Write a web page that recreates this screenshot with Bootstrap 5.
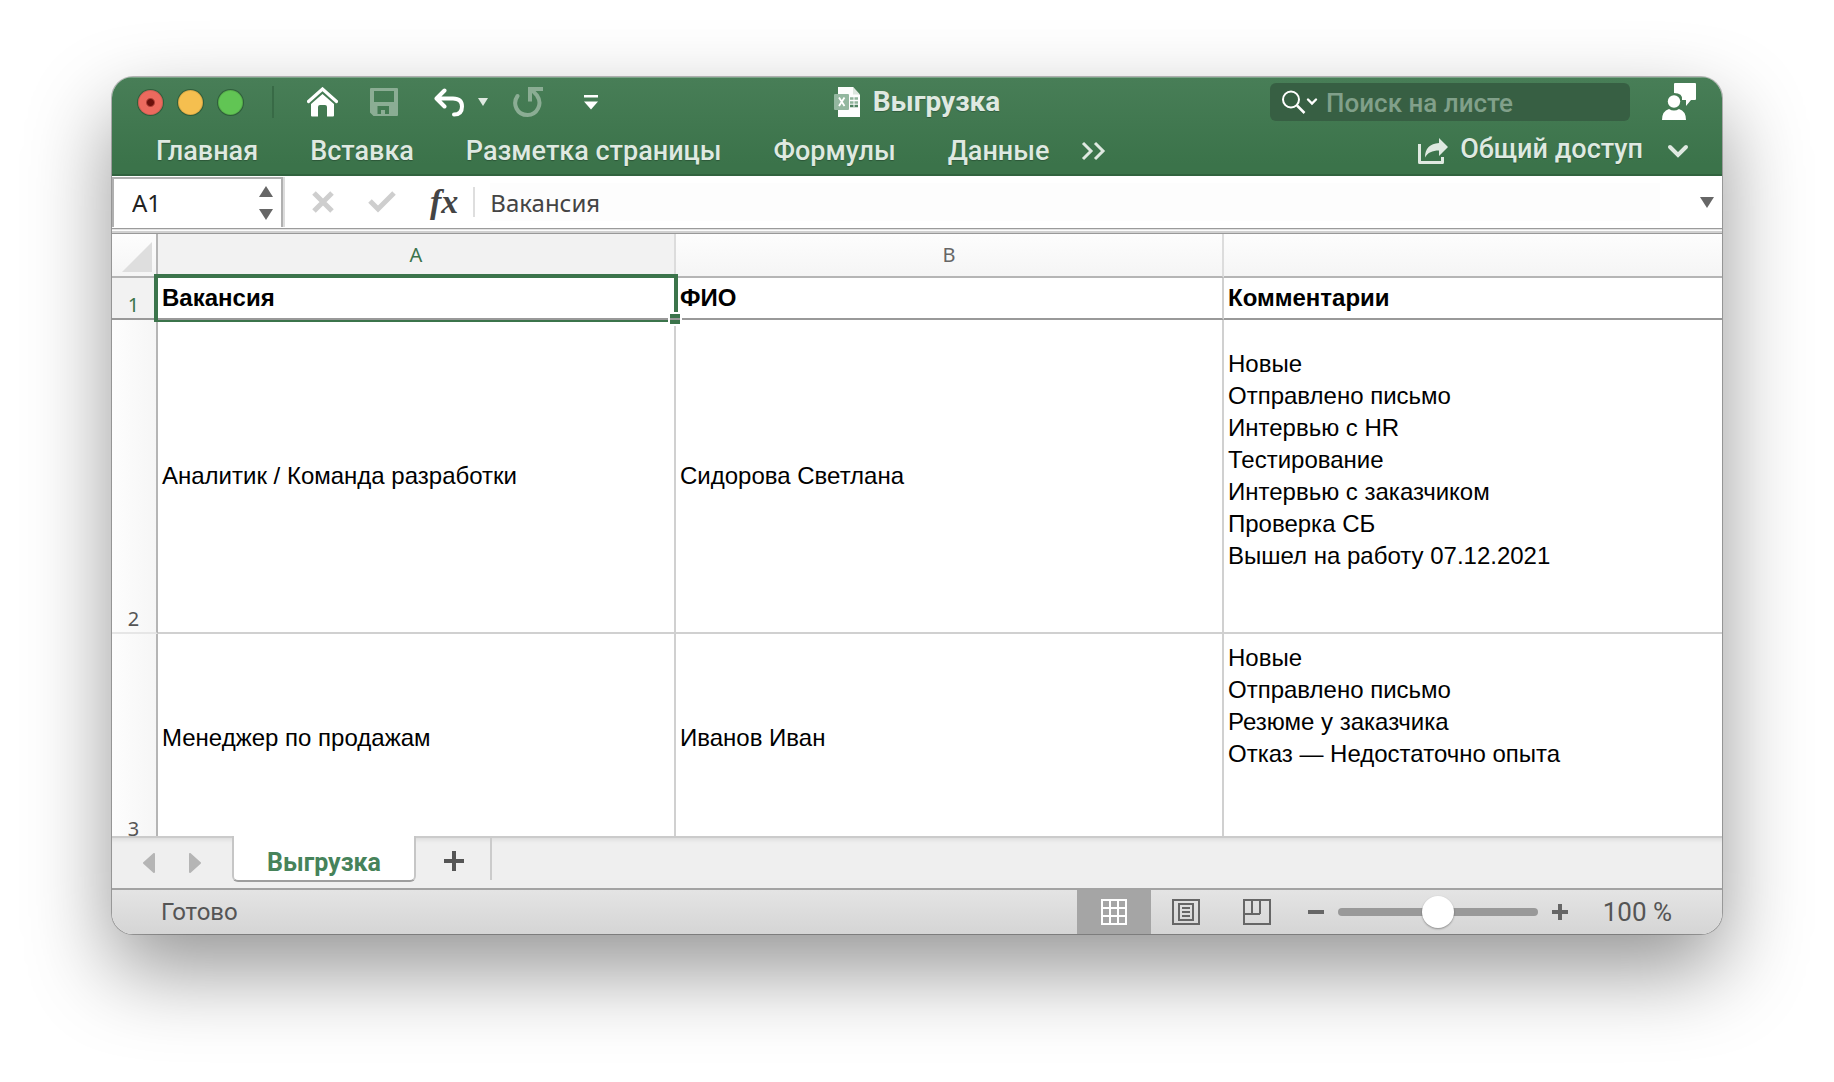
<!DOCTYPE html>
<html lang="ru">
<head>
<meta charset="utf-8">
<meta name="viewport" content="width=device-width, initial-scale=1">
<title>Выгрузка</title>
<link href="https://cdn.jsdelivr.net/npm/bootstrap@5.3.0/dist/css/bootstrap.min.css" rel="stylesheet">
<style>
  :root {
    --ui: Roboto, "Liberation Sans", sans-serif;
    --office: "Noto Sans", "Open Sans", sans-serif;
    --cell: "Liberation Sans", Arial, sans-serif;
    --green: #3b744b;
  }
  body { background: #fff; font-family: var(--ui); padding: 77px 112px 148px; }
  button { background: none; border: 0; padding: 0; color: inherit; font: inherit; }
  input { border: 0; outline: 0; padding: 0; background: none; min-width: 0; }
  svg { display: block; flex: none; }
  a { color: inherit; text-decoration: none; }

  .app-window { border-radius: 21px; overflow: hidden; box-shadow: 0 0 0 1px rgba(0,0,0,.26), 0 36px 84px rgba(0,0,0,.42); }

  .ribbon { background: linear-gradient(#487e57, #3b734a 90%); border-bottom: 2px solid #31633f; height: 99px; color: #dfe9e1; box-shadow: inset 0 1px 0 #7ba387; }
  .title-row { height: 50px; padding: 0 26px; }
  .side { flex: 1 1 0; }
  .dots { gap: 15px; }
  .dot { width: 25px; height: 25px; border-radius: 50%; border: 1px solid rgba(0,0,0,.12); box-shadow: 0 0 0 1px rgba(20,60,30,.45); }
  .dot-red { background: radial-gradient(circle, #6b100c 3px, #ec6a5e 5px); }
  .dot-yellow { background: #f5bf4f; }
  .dot-green { background: #61c554; }
  .split { width: 2px; height: 32px; margin: 0 33px 0 29px; background: #386a46; }
  .quick { color: #fff; }
  .faded { color: #8bad94; }
  .doc-title { font-size: 28px; font-weight: 700; line-height: 32px; text-shadow: 0 1px 1px rgba(0,0,0,.25); }
  .search-box { width: 360px; height: 38px; border-radius: 6px; background: #375f43; padding-left: 12px; color: #fff; }
  .search-box input { color: #fff; font-size: 26px; font-weight: 500; margin-left: 8px; height: 38px; padding-top: 2px; }
  .search-box input::placeholder { color: #81a08a; opacity: 1; }
  .menu-row { height: 47px; padding: 0 33px 0 44px; font-size: 27px; font-weight: 500; line-height: 32px; text-shadow: 0 1px 1px rgba(0,0,0,.25); }
  .menu-tabs { gap: 52px; }
  .more { margin-left: 32px; }
  .share { gap: 12px; }

  .formula-bar { background: #fff; height: 52px; font-family: var(--office); font-size: 24px; color: #444; padding-right: 8px; }
  .name-box { width: 171px; height: 50px; border: 2px solid #b0b0b0; border-bottom: 0; box-shadow: 2px 0 0 #dcdcdc; padding: 0 8px 0 18px; margin-top: -1px; }
  .name-box input { width: 100px; color: #222; }
  .spin { gap: 12px; color: #666; }
  .formula-tools { gap: 34px; margin: 0 15px 0 29px; color: #cecece; }
  .fx { font: italic 700 34px/34px "Liberation Serif", serif; color: #444; }
  .formula-split { width: 2px; height: 30px; background: #dedede; margin-right: 15px; }
  .formula-input { background: #fdfdfd; height: 38px; color: #444; }
  .bar-rule { height: 6px; background: linear-gradient(#9b9b9b 1px, #e2e2e2 1px 2px, #fbfbfb 2px 3px, #d0d0d0 3px 5px, #999 5px); }

  .sheet-view { height: 602px; overflow: hidden; background: #fff; }
  .sheet { width: 100%; table-layout: fixed; border-collapse: separate; border-spacing: 0; font-family: var(--cell); font-size: 24px; line-height: 32px; color: #000; }
  .sheet th, .sheet td { padding: 0 4px; border-right: 2px solid #d0d0d0; border-bottom: 2px solid #d0d0d0; }
  .sheet th:last-child, .sheet td:last-child { border-right: 0; }
  .c-num { width: 46px; }
  .c-a { width: 518px; }
  .c-b { width: 548px; }
  .sheet thead th { height: 44px; text-align: center; font: 400 20px/28px var(--office); color: #666; background: linear-gradient(#fdfdfd, #f5f5f5); border-color: #b5b5b5; border-right-color: #dcdcdc; }
  .sheet thead th.picked { background: #f2f2f2; color: var(--green); }
  .sheet thead th.corner { padding: 4px 4px 0 10px; border-right-color: #b5b5b5; }
  .sheet tbody th { font: 400 20px/24px var(--office); color: #555; vertical-align: bottom; text-align: center; background: linear-gradient(90deg, #fdfdfd, #f6f6f6); border-right-color: #b5b5b5; border-bottom-color: #e6e6e6; padding: 0 1px 1px 0; }
  .sheet tbody th.picked { background: #f2f2f2; color: var(--green); }
  .sheet .row-one td, .sheet .row-one th { height: 42px; border-bottom-color: #999; }
  .sheet .row-one td { font-weight: 700; }
  .row-two { height: 314px; }
  .row-three { height: 210px; }
  .active-cell { position: relative; }
  .active-cell::before { content: ""; position: absolute; inset: -4px; border: 4px solid var(--green); border-bottom-width: 2px; }
  .active-cell::after { content: ""; position: absolute; right: -6px; bottom: -6px; width: 10px; height: 10px; background: linear-gradient(var(--green) 4px, #999 4px 6px, var(--green) 6px); box-shadow: 0 0 0 2px #fff; }

  .tab-bar { height: 54px; background: #efefef; border-top: 2px solid #cbcbcb; border-bottom: 2px solid #a3a3a3; padding-left: 30px; color: #b5b5b5; box-shadow: inset 0 5px 4px -3px rgba(0,0,0,.08); }
  .tab-arrows { gap: 32px; margin-right: 30px; }
  .sheet-tab { width: 184px; height: 46px; margin-top: -2px; background: #fff; border: 2px solid #c6c6c6; border-top: 0; border-bottom-color: #9e9e9e; border-radius: 0 0 6px 6px; color: #46835a; font-size: 25px; font-weight: 700; padding-top: 8px; }
  .add-tab { color: #555; margin: 0 26px 4px 28px; }
  .tab-split { width: 2px; height: 42px; background: #cbcbcb; }

  .status-bar { height: 44px; background: linear-gradient(#e4e4e4, #d5d5d5); color: #555; font-size: 24px; padding: 0 50px 0 49px; }
  .view-btn { height: 44px; width: 71px; color: #666; }
  .view-btn.on { width: 74px; background: #a5a5a5; color: #fff; }
  .zoom-group { gap: 14px; margin: 0 35px 0 15px; color: #666; }
  .zoom-value { font-size: 26px; }
  .zoom-range { appearance: none; width: 200px; height: 34px; margin: 0; }
  .zoom-range::-webkit-slider-runnable-track { height: 8px; border-radius: 4px; background: #999; }
  .zoom-range::-webkit-slider-thumb { appearance: none; width: 32px; height: 32px; margin-top: -12px; border-radius: 50%; background: #fff; box-shadow: 0 1px 2px rgba(0,0,0,.35); }
</style>
<script src="https://cdn.jsdelivr.net/npm/bootstrap@5.3.0/dist/js/bootstrap.bundle.min.js"></script>
</head>
<body>
<main class="app-window">
  <header class="ribbon">
    <div class="title-row d-flex align-items-center">
      <div class="side d-flex align-items-center">
        <div class="dots d-flex">
          <button class="dot dot-red" aria-label="Закрыть"></button>
          <button class="dot dot-yellow" aria-label="Свернуть"></button>
          <button class="dot dot-green" aria-label="Развернуть"></button>
        </div>
        <span class="split"></span>
        <div class="quick d-flex align-items-center">
          <button aria-label="Домой" class="me-4 pe-2">
            <svg width="31" height="30" viewBox="0 0 31 30"><path d="M1.500 14.500 15.500 2l14 12.500" fill="none" stroke="currentColor" stroke-width="3.200" stroke-linecap="round"/><path d="M4 17 15.500 7 27 17v11.500q0 1-1 1h-6V20q0-2-2-2h-5q-2 0-2 2v9.500H5q-1 0-1-1z" fill="currentColor"/></svg>
          </button>
          <button aria-label="Сохранить" class="faded me-4">
            <svg width="28" height="28" viewBox="0 0 28 28"><path fill="currentColor" fill-rule="evenodd" d="M1 0h26q1 0 1 1v26q0 1-1 1H3.500L0 24.500V1q0-1 1-1zM4 3v11h20V3zM7.500 18v8H11v-4h4v4h4v-8z"/></svg>
          </button>
          <button aria-label="Отменить" class="ms-2 ps-1">
            <svg width="31" height="29" viewBox="0 0 31 29" fill="none" stroke="currentColor" stroke-width="4" stroke-linecap="round" stroke-linejoin="round"><path d="M10.500 2.500 2.500 10.500l8 8M3.500 10.500H19q9 0 9 8t-8 8"/></svg>
          </button>
          <button aria-label="Список отмены" class="ms-2 ps-1">
            <svg width="12" height="10" viewBox="0 0 12 10"><path d="M1 1h10L6 9z" fill="#dfe9e1"/></svg>
          </button>
          <button aria-label="Повторить" class="faded ms-4">
            <svg width="31" height="30" viewBox="0 0 31 30" fill="none" stroke="currentColor" stroke-width="4"><path d="M4.500 9C-1 17 4 28 14.500 28c9.500 0 15.500-11 9.500-19.500L19 3" stroke-linecap="round"/><path d="M30 2H17v12.500"/></svg>
          </button>
          <button aria-label="Настроить панель" class="ms-4 ps-3">
            <svg width="14" height="15" viewBox="0 0 14 15"><path d="M0 0h14v2.500H0zM0 6.500h14l-7 8z" fill="currentColor"/></svg>
          </button>
        </div>
      </div>
      <div class="d-flex align-items-center">
        <svg class="me-2" width="27" height="30" viewBox="0 0 27 30"><path d="M4 0h15l7 8v22H4z" fill="#fdfdfd"/><path d="M19 0v7.500h7z" fill="#dce6de"/><path d="M16 11.500h8M16 15.500h8" stroke="#8fb39a" stroke-width="2.500"/><path d="M16 19h8" stroke="#4f8260" stroke-width="2.500"/><path d="M20 10v10" stroke="#fdfdfd"/><rect y="7" width="15" height="16" rx="1" fill="#93b79f"/><path d="m5 10.500 5.500 8.500M10.500 10.500 5 19" stroke="#fff" stroke-width="1.800" fill="none"/></svg>
        <h1 class="doc-title m-0 ps-1">Выгрузка</h1>
      </div>
      <div class="side d-flex align-items-center justify-content-end">
        <label class="search-box d-flex align-items-center">
          <svg width="36" height="24" viewBox="0 0 36 24" fill="none" stroke="currentColor" stroke-width="2"><circle cx="9" cy="9.500" r="8"/><path d="m15 15.500 7.500 7.500" stroke-width="2.500"/><path d="m26 9.500 4 4 4-4" stroke-width="2.400" stroke-linecap="round"/></svg>
          <input type="text" placeholder="Поиск на листе" aria-label="Поиск на листе">
        </label>
        <button aria-label="Учётная запись" class="ms-4 ps-2 quick">
          <svg width="34" height="38" viewBox="0 0 34 38" fill="currentColor"><path d="M13 0h20q1 0 1 1v15q0 1-1 1h-4l-5 6v-6h-4q1-7-8-7V1q0-1 1-1z"/><circle cx="12" cy="18.500" r="6.200"/><path d="M0 37q0-9 7-11 5 3 10 0 7 2 7 11z"/></svg>
        </button>
      </div>
    </div>
    <nav class="menu-row d-flex align-items-center">
      <div class="menu-tabs d-flex">
        <a href="#">Главная</a><a href="#">Вставка</a><a href="#">Разметка страницы</a><a href="#">Формулы</a><a href="#">Данные</a>
      </div>
      <button class="more" aria-label="Другие вкладки">
        <svg width="25" height="20" viewBox="0 0 25 20" fill="none" stroke="currentColor" stroke-width="3"><path d="m2 2 8 8-8 8M14 2l8 8-8 8"/></svg>
      </button>
      <a class="share d-flex align-items-center ms-auto pb-1" href="#">
        <svg class="mt-1" width="30" height="26" viewBox="0 0 30 26"><path d="M1.500 6v18.500h23V19" fill="none" stroke="currentColor" stroke-width="3" stroke-linejoin="round"/><path d="M21 0l9 9-9 9v-5.500c-7 0-11 2-14 7 0-9 5-14 14-14.500z" fill="currentColor"/></svg>
        Общий доступ
      </a>
      <button class="ms-4" aria-label="Свернуть ленту">
        <svg width="22" height="14" viewBox="0 0 22 14" fill="none" stroke="currentColor" stroke-width="4" stroke-linecap="round"><path d="m3 3 8 8 8-8"/></svg>
      </button>
    </nav>
  </header>

  <div class="formula-bar d-flex align-items-center">
    <div class="name-box d-flex align-items-center justify-content-between">
      <input type="text" value="A1" aria-label="Поле имени">
      <button class="spin d-flex flex-column" aria-label="Выбрать имя">
        <svg width="14" height="11"><path d="M0 11h14L7 0z" fill="currentColor"/></svg>
        <svg width="14" height="11"><path d="M0 0h14L7 11z" fill="currentColor"/></svg>
      </button>
    </div>
    <div class="formula-tools d-flex align-items-center">
      <button aria-label="Отмена"><svg width="22" height="22" viewBox="0 0 22 22" stroke="currentColor" stroke-width="5"><path d="m2 2 18 18M20 2 2 20"/></svg></button>
      <button aria-label="Ввод"><svg width="28" height="22" viewBox="0 0 28 22" fill="none" stroke="currentColor" stroke-width="5"><path d="m2 10 8 8L26 2"/></svg></button>
      <button class="fx" aria-label="Вставить функцию">fx</button>
    </div>
    <span class="formula-split"></span>
    <input class="formula-input flex-grow-1" type="text" value="Вакансия" aria-label="Строка формул">
    <button class="ms-4 ps-3" aria-label="Развернуть строку формул"><svg width="14" height="11"><path d="M0 0h14L7 11z" fill="#666"/></svg></button>
  </div>
  <div class="bar-rule"></div>

  <div class="sheet-view">
    <table class="sheet">
      <colgroup><col class="c-num"><col class="c-a"><col class="c-b"><col></colgroup>
      <thead>
        <tr>
          <th class="corner"><svg width="30" height="30"><path d="M30 0v30H0z" fill="#dedede"/></svg></th>
          <th class="picked" scope="col">A</th>
          <th scope="col">B</th>
          <th></th>
        </tr>
      </thead>
      <tbody>
        <tr class="row-one">
          <th class="picked" scope="row">1</th>
          <td class="active-cell">Вакансия</td>
          <td>ФИО</td>
          <td>Комментарии</td>
        </tr>
        <tr class="row-two">
          <th scope="row">2</th>
          <td>Аналитик / Команда разработки</td>
          <td>Сидорова Светлана</td>
          <td>Новые<br>Отправлено письмо<br>Интервью с HR<br>Тестирование<br>Интервью с заказчиком<br>Проверка СБ<br>Вышел на работу 07.12.2021<br><br></td>
        </tr>
        <tr class="row-three">
          <th scope="row">3</th>
          <td>Менеджер по продажам</td>
          <td>Иванов Иван</td>
          <td>Новые<br>Отправлено письмо<br>Резюме у заказчика<br>Отказ — Недостаточно опыта<br><br>&nbsp;</td>
        </tr>
      </tbody>
    </table>
  </div>

  <div class="tab-bar d-flex align-items-center">
    <div class="tab-arrows d-flex">
      <button aria-label="Предыдущий лист"><svg width="14" height="20"><path d="M12 1v18L2 10z" fill="currentColor" stroke="currentColor" stroke-width="2" stroke-linejoin="round"/></svg></button>
      <button aria-label="Следующий лист"><svg width="14" height="20"><path d="M2 1v18l10-9z" fill="currentColor" stroke="currentColor" stroke-width="2" stroke-linejoin="round"/></svg></button>
    </div>
    <button class="sheet-tab align-self-start">Выгрузка</button>
    <button class="add-tab" aria-label="Добавить лист"><svg width="20" height="20" stroke="currentColor" stroke-width="4"><path d="M10 0v20M0 10h20"/></svg></button>
    <span class="tab-split align-self-start"></span>
  </div>

  <footer class="status-bar d-flex align-items-center">
    <span class="me-auto">Готово</span>
    <button class="view-btn on d-flex align-items-center justify-content-center" aria-label="Обычный">
      <svg width="26" height="26" viewBox="0 0 26 26" fill="none" stroke="currentColor" stroke-width="2"><rect x="1" y="1" width="24" height="24"/><path d="M9 1v24M17 1v24M1 9h24M1 17h24"/></svg>
    </button>
    <button class="view-btn d-flex align-items-center justify-content-center" aria-label="Разметка страницы">
      <svg width="28" height="26" viewBox="0 0 28 26" fill="none" stroke="currentColor" stroke-width="2"><rect x="1" y="1" width="26" height="24"/><rect x="7" y="5" width="14" height="16"/><path d="M10 9h8M10 13h8M10 17h8"/></svg>
    </button>
    <button class="view-btn d-flex align-items-center justify-content-center" aria-label="Страничный режим">
      <svg width="28" height="26" viewBox="0 0 28 26" fill="none" stroke="currentColor" stroke-width="2"><rect x="1" y="1" width="26" height="24"/><path d="M9 1v14M17 1v14M1 15h16"/></svg>
    </button>
    <div class="zoom-group d-flex align-items-center">
      <button aria-label="Уменьшить"><svg width="16" height="16" stroke="currentColor" stroke-width="4"><path d="M0 8h16"/></svg></button>
      <input class="zoom-range" type="range" min="0" max="200" value="100" aria-label="Масштаб">
      <button aria-label="Увеличить"><svg width="16" height="16" stroke="currentColor" stroke-width="4"><path d="M8 0v16M0 8h16"/></svg></button>
    </div>
    <span class="zoom-value">100 %</span>
  </footer>
</main>
</body>
</html>
